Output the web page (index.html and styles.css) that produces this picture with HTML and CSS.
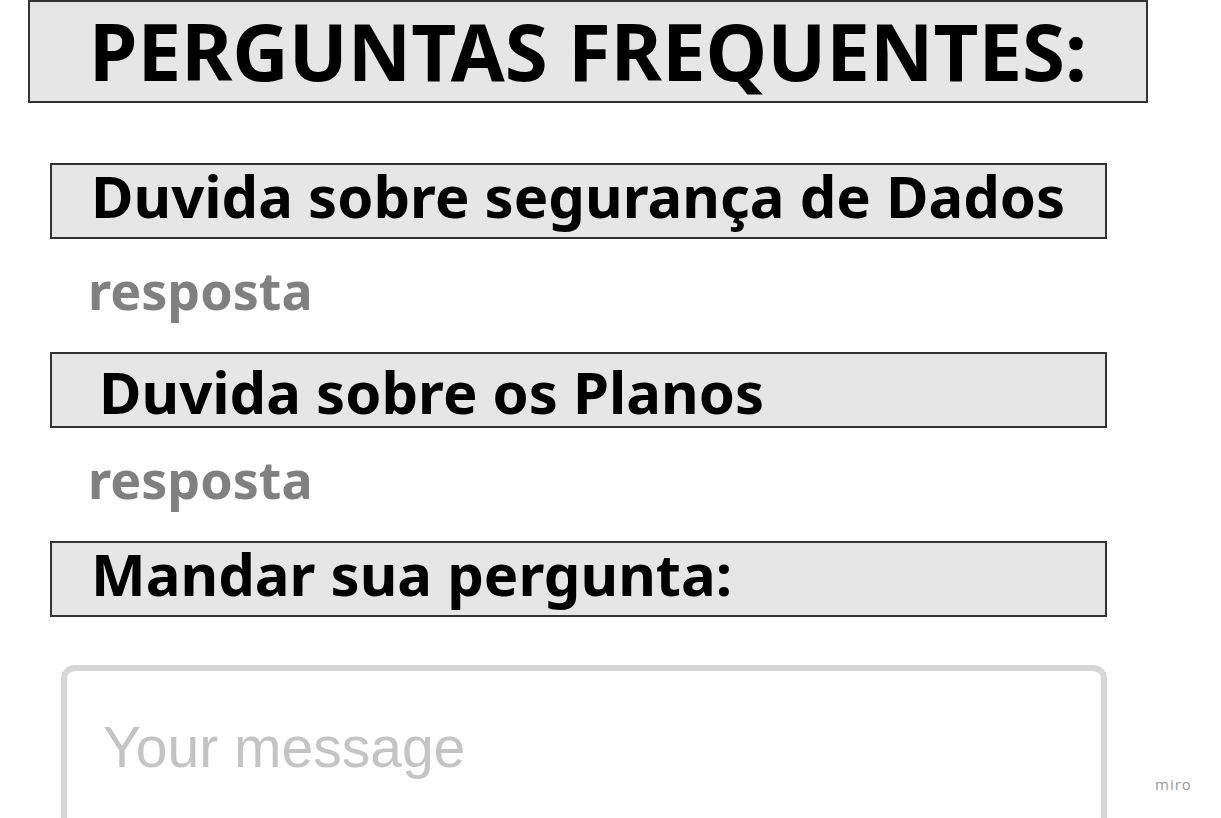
FILE: index.html
```html
<!DOCTYPE html>
<html lang="pt">
<head>
<meta charset="utf-8">
<title>Perguntas Frequentes</title>
<link rel="stylesheet" href="styles.css">
</head>
<body>
<main class="board">
  <h1 class="title-box">PERGUNTAS FREQUENTES:</h1>
  <h2 class="q-box q-first">Duvida sobre segurança de Dados</h2>
  <p class="answer">resposta</p>
  <h2 class="q-box q-planos">Duvida sobre os Planos</h2>
  <p class="answer">resposta</p>
  <h2 class="q-box q-send">Mandar sua pergunta:</h2>
  <div class="message">
    <span class="placeholder">Your message</span>
  </div>
</main>
<div class="miro">miro</div>
</body>
</html>
```
FILE: styles.css
```css
html, body {
  margin: 0;
  padding: 0;
  background: #ffffff;
}
body {
  width: 1221px;
  height: 818px;
  position: relative;
  overflow: hidden;
  font-family: "Noto Sans", "Open Sans", sans-serif;
}
.board {
  display: flex;
  flex-direction: column;
  align-items: flex-start;
}
.board > * {
  flex-shrink: 0;
}
.title-box {
  box-sizing: border-box;
  margin: 0 0 0 28px;
  width: 1120px;
  height: 103px;
  border: 2px solid #333333;
  background: #e6e6e6;
  color: #000;
  font-size: 78px;
  font-weight: 700;
  line-height: 99px;
  text-align: center;
  white-space: nowrap;
}
.q-box {
  box-sizing: border-box;
  margin: 0 0 0 50px;
  width: 1057px;
  height: 76px;
  border: 2px solid #333333;
  background: #e6e6e6;
  color: #000;
  font-size: 58px;
  font-weight: 700;
  line-height: 62px;
  padding-left: 39px;
  white-space: nowrap;
}
.q-first { margin-top: 60px; }
.q-planos {
  padding-left: 47px;
  padding-top: 7px;
}
.answer {
  margin: 0 0 0 88px;
  height: 113px;
  box-sizing: border-box;
  padding-top: 19px;
  font-size: 52px;
  font-weight: 700;
  line-height: 64px;
  color: #808080;
}
.message {
  box-sizing: border-box;
  margin: 48px 0 0 61px;
  width: 1046px;
  height: 200px;
  border: 6px solid #d6d6d6;
  border-radius: 14px;
  padding: 44px 0 0 36px;
}
.placeholder {
  font-family: "Liberation Sans", Arial, sans-serif;
  font-size: 57px;
  line-height: 64px;
  color: #c4c4c4;
}
.miro {
  position: absolute;
  left: 1155px;
  top: 774px;
  font-family: "Open Sans", sans-serif;
  font-size: 15px;
  letter-spacing: 1px;
  color: #9a9a9a;
}
```
